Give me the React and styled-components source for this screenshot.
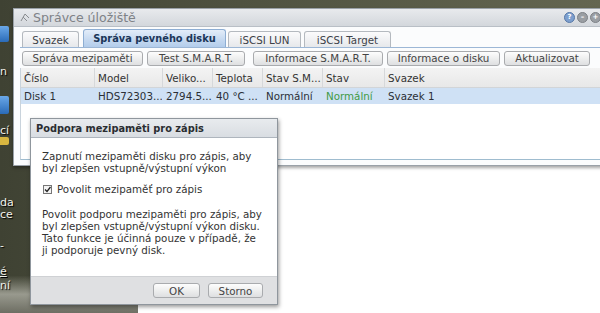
import React from 'react';
import styled, { createGlobalStyle } from 'styled-components';

const Global = createGlobalStyle`
  html, body { margin: 0; padding: 0; }
  body {
    width: 600px; height: 313px; overflow: hidden;
    font-family: "DejaVu Sans", Verdana, sans-serif;
    font-size: 10.3px; color: #222;
  }
`;

const FS = '10.3px';

const Desktop = styled.div`
  position: relative;
  width: 600px; height: 313px; overflow: hidden;
  background:
    linear-gradient(180deg, rgba(0,0,0,0) 0%, rgba(0,0,0,0) 88%, rgba(190,190,180,0.7) 94%, rgba(120,120,110,0.8) 100%),
    linear-gradient(90deg, #3f4233 0%, #4f5240 40%, #646651 100%);
`;

const DeskIcon = styled.div`
  position: absolute;
  left: 0; top: ${p => p.$top}px;
  width: 9px; height: ${p => p.$h}px;
  background: ${p => p.$color};
  border-radius: 0 2px 2px 0;
`;

const DeskLabel = styled.div`
  position: absolute;
  left: 0; top: ${p => p.$top}px;
  font-size: 11px; line-height: 12px;
  color: #f2f2ea;
  text-decoration: ${p => (p.$u ? 'underline' : 'none')};
  text-shadow: 1px 1px 1px #000;
`;

const BackWindow = styled.div`
  position: absolute;
  left: 138px; top: 150px; right: 0; bottom: 0;
  background: #fff;
`;

const Window = styled.div`
  position: absolute;
  left: 13px; top: 8px;
  width: 600px; height: 156px;
  background: #fff;
  border: 1px solid #9aa1a8;
  border-right: none;
  box-shadow: 0 2px 3px rgba(0,0,0,0.35);
  display: flex; flex-direction: column;
`;

const TitleBar = styled.div`
  height: 17px;
  display: flex; align-items: center;
  padding-left: 6px;
  background: linear-gradient(180deg, #e8eaed 0%, #d3d7dc 100%);
  border-bottom: 1px solid #b9bfc6;
  position: relative;
`;

const TitleText = styled.span`
  font-size: 12.5px;
  color: #7e8287;
  margin-left: 2px;
`;

const Controls = styled.div`
  position: absolute;
  right: 13px; top: 3px;
  display: flex; gap: 2px;
`;

const Ctl = styled.div`
  width: 11px; height: 11px; border-radius: 50%;
  background: ${p => p.$bg};
  border: 1px solid ${p => p.$bd};
  box-sizing: border-box;
  display: flex; align-items: center; justify-content: center;
  font-size: 7px; line-height: 7px; color: #fff; font-weight: bold;
`;

const Body = styled.div`
  flex: 1;
  display: flex; flex-direction: column;
  padding: 1px 0 5px 6px;
  background: #fbfcfd;
`;

const Tabs = styled.div`
  display: flex; align-items: flex-end;
  height: 19px;
  padding-left: 2px;
  border-bottom: 1px solid #9cb7d6;
`;

const Tab = styled.div`
  width: ${p => p.$w}px;
  margin-right: ${p => p.$mr}px;
  height: ${p => (p.$active ? 18 : 16)}px;
  box-sizing: border-box;
  display: flex; align-items: center; justify-content: center;
  border: 1px solid ${p => (p.$active ? '#8eaed3' : '#b4b9bf')};
  border-bottom: none;
  border-radius: 3px 3px 0 0;
  font-size: ${p => (p.$active ? '9.8px' : FS)};
  font-weight: ${p => (p.$active ? 'bold' : 'normal')};
  color: ${p => (p.$active ? '#1b3658' : '#3c4148')};
  background: ${p => (p.$active
    ? 'linear-gradient(180deg, #e3edf9 0%, #c4d8f0 60%, #b3cdeb 100%)'
    : 'linear-gradient(180deg, #fbfbfc 0%, #e6e8eb 100%)')};
  white-space: nowrap;
`;

const Toolbar = styled.div`
  display: flex; align-items: center;
  gap: 4px;
  height: 20px;
  padding-left: 2px;
`;

const Btn = styled.div`
  width: ${p => p.$w}px;
  height: 15px;
  box-sizing: border-box;
  margin-right: ${p => p.$mr || 0}px;
  border: 1px solid #a9abae;
  border-radius: 3px;
  background: linear-gradient(180deg, #fdfdfd 0%, #eceded 55%, #dedfe1 100%);
  display: flex; align-items: center; justify-content: center;
  font-size: ${FS};
  color: #444;
  white-space: nowrap;
`;

const Grid = styled.div`
  flex: 1;
  border-left: 1px solid #c9d3dc;
  border-bottom: 1px solid #9fbccf;
  display: flex; flex-direction: column;
  background: #fff;
`;

const cols = '73px 68px 50px 50px 60px 62px 1fr';

const HeadRow = styled.div`
  display: grid;
  grid-template-columns: ${cols};
  height: 19px;
  background: linear-gradient(180deg, #f3f3f3 0%, #e8e8e8 100%);
  border-bottom: 1px solid #d2d5d8;
`;

const HeadCell = styled.div`
  display: flex; align-items: center;
  padding-left: 3px;
  font-size: ${FS};
  color: #333;
  border-left: ${p => (p.$first ? 'none' : '1px solid #d6d8da')};
  white-space: nowrap; overflow: hidden;
`;

const Row = styled.div`
  display: grid;
  grid-template-columns: ${cols};
  height: 16px;
  background: #cfe1f5;
`;

const Cell = styled.div`
  display: flex; align-items: center;
  padding-left: ${p => (p.$first ? 3 : 4)}px;
  font-size: ${FS};
  color: ${p => (p.$ok ? '#3f9a45' : '#2b2f36')};
  white-space: nowrap; overflow: hidden;
`;

const Dialog = styled.div`
  position: absolute;
  left: 30px; top: 118px;
  width: 248px; height: 187px;
  box-sizing: border-box;
  border: 1px solid #8f969d;
  background: #fff;
  box-shadow: 1px 2px 4px rgba(0,0,0,0.4);
  display: flex; flex-direction: column;
`;

const DlgTitle = styled.div`
  height: 18px;
  display: flex; align-items: center;
  padding-left: 5px;
  background: linear-gradient(180deg, #e8ebee 0%, #d9dde2 100%);
  border-bottom: 1px solid #aeb5bd;
  font-size: 9.8px; font-weight: bold; color: #2a2d31;
`;

const DlgBody = styled.div`
  flex: 1;
  padding: 12px 10px 0 11px;
  display: flex; flex-direction: column;
  gap: 9px;
`;

const Para = styled.p`
  margin: 0;
  font-size: ${FS}; line-height: 12px;
  color: #333;
  white-space: nowrap;
`;

const CheckLine = styled.label`
  display: flex; align-items: center; gap: 5px;
  margin: 0 0 4px 1px;
  font-size: ${FS}; color: #333;
`;

const Box = styled.span`
  width: 7px; height: 7px;
  border: 1px solid #777;
  background: #f4f4f4;
  display: inline-flex; align-items: center; justify-content: center;
`;

const Footer = styled.div`
  height: 27px;
  display: flex; align-items: center; justify-content: flex-end;
  gap: 8px;
  padding-right: 14px;
  background: #dfe0e2;
  border-top: 1px solid #cfd1d4;
`;

export default function App() {
  return (
    <>
      <Global />
      <Desktop>
        <DeskIcon $top={26} $h={16} $color="linear-gradient(180deg,#6aa8e8,#2a6bb8)" />
        <DeskLabel $top={66}>n</DeskLabel>
        <DeskIcon $top={96} $h={18} $color="linear-gradient(180deg,#6aa8e8,#2a6bb8)" />
        <DeskLabel $top={125}>cí</DeskLabel>
        <DeskIcon $top={137} $h={8} $color="#d8b640" />
        <DeskLabel $top={197}>da</DeskLabel>
        <DeskLabel $top={209}>ce</DeskLabel>
        <DeskLabel $top={240}>-</DeskLabel>
        <DeskLabel $top={266} $u>é</DeskLabel>
        <DeskLabel $top={280}>ní</DeskLabel>

        <BackWindow />

        <Window>
          <TitleBar>
            <svg width="11" height="11" viewBox="0 0 11 11">
              <path d="M1 9 L5 2 L9 6 M3 5 L7 9" stroke="#8a8d90" strokeWidth="1" fill="none" />
            </svg>
            <TitleText>Správce úložiště</TitleText>
            <Controls>
              <Ctl $bg="#7d9fce" $bd="#5678a8">?</Ctl>
              <Ctl $bg="#9a9ea3" $bd="#7d8186">–</Ctl>
              <Ctl $bg="#9a9ea3" $bd="#7d8186">+</Ctl>
            </Controls>
          </TitleBar>
          <Body>
            <Tabs>
              <Tab $w={57} $mr={4}>Svazek</Tab>
              <Tab $active $w={143} $mr={2}>Správa pevného disku</Tab>
              <Tab $w={73} $mr={3}>iSCSI LUN</Tab>
              <Tab $w={87} $mr={0}>iSCSI Target</Tab>
            </Tabs>
            <Toolbar>
              <Btn $w={121}>Správa mezipaměti</Btn>
              <Btn $w={98} $mr={4}>Test S.M.A.R.T.</Btn>
              <Btn $w={130}>Informace S.M.A.R.T.</Btn>
              <Btn $w={113}>Informace o disku</Btn>
              <Btn $w={86}>Aktualizovat</Btn>
            </Toolbar>
            <Grid>
              <HeadRow>
                <HeadCell $first>Číslo</HeadCell>
                <HeadCell>Model</HeadCell>
                <HeadCell>Veliko...</HeadCell>
                <HeadCell>Teplota</HeadCell>
                <HeadCell>Stav S.M...</HeadCell>
                <HeadCell>Stav</HeadCell>
                <HeadCell>Svazek</HeadCell>
              </HeadRow>
              <Row>
                <Cell $first>Disk 1</Cell>
                <Cell>HDS72303...</Cell>
                <Cell>2794.5...</Cell>
                <Cell>40 °C ...</Cell>
                <Cell>Normální</Cell>
                <Cell $ok>Normální</Cell>
                <Cell>Svazek 1</Cell>
              </Row>
            </Grid>
          </Body>
        </Window>

        <Dialog>
          <DlgTitle>Podpora mezipaměti pro zápis</DlgTitle>
          <DlgBody>
            <Para>Zapnutí mezipaměti disku pro zápis, aby<br />byl zlepšen vstupně/výstupní výkon</Para>
            <CheckLine>
              <Box>
                <svg width="7" height="7" viewBox="0 0 7 7">
                  <path d="M1 3.5 L3 5.5 L6.5 1" stroke="#222" strokeWidth="1.3" fill="none" />
                </svg>
              </Box>
              Povolit mezipaměť pro zápis
            </CheckLine>
            <Para>
              Povolit podporu mezipaměti pro zápis, aby<br />
              byl zlepšen vstupně/výstupní výkon disku.<br />
              Tato funkce je účinná pouze v případě, že<br />
              ji podporuje pevný disk.
            </Para>
          </DlgBody>
          <Footer>
            <Btn $w={47}>OK</Btn>
            <Btn $w={55}>Storno</Btn>
          </Footer>
        </Dialog>
      </Desktop>
    </>
  );
}
